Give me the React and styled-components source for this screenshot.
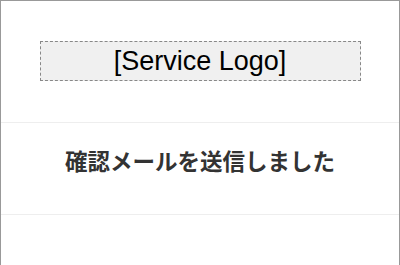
import styled, { createGlobalStyle } from "styled-components";

const GlobalStyle = createGlobalStyle`
	html, body {
		margin: 0;
		padding: 0;
		background: #ffffff;
	}
	body {
		font-family: "Liberation Sans", Arial, "Noto Sans CJK JP", sans-serif;
	}
`;

const StyledPage = styled.div`
	width: 400px;
	min-height: 300px;
	box-sizing: border-box;
	border: 1px solid #999999;
	background: #ffffff;
`;

const StyledHeader = styled.header`
	padding: 40px 0 41px;
	border-bottom: 1px solid #eeeeee;
	display: flex;
	justify-content: center;
`;

const StyledLogo = styled.div`
	width: 321px;
	height: 40px;
	box-sizing: border-box;
	border: 1px dashed #888888;
	background: #f0f0f0;
	display: flex;
	align-items: center;
	justify-content: center;
	font-family: "Liberation Sans", Arial, sans-serif;
	font-size: 27px;
	color: #000000;
`;

const StyledMessage = styled.section`
	padding: 21px 0 38px;
	border-bottom: 1px solid #eeeeee;
	text-align: center;
`;

const StyledTitle = styled.h1`
	margin: 0;
	font-family: "Noto Sans CJK JP", "Noto Sans", sans-serif;
	font-size: 22.5px;
	line-height: 32px;
	font-weight: 700;
	color: #333333;
`;

export default function App() {
	return (
		<>
			<GlobalStyle />
			<StyledPage>
				<StyledHeader>
					<StyledLogo>[Service Logo]</StyledLogo>
				</StyledHeader>
				<StyledMessage>
					<StyledTitle>確認メールを送信しました</StyledTitle>
				</StyledMessage>
			</StyledPage>
		</>
	);
}
